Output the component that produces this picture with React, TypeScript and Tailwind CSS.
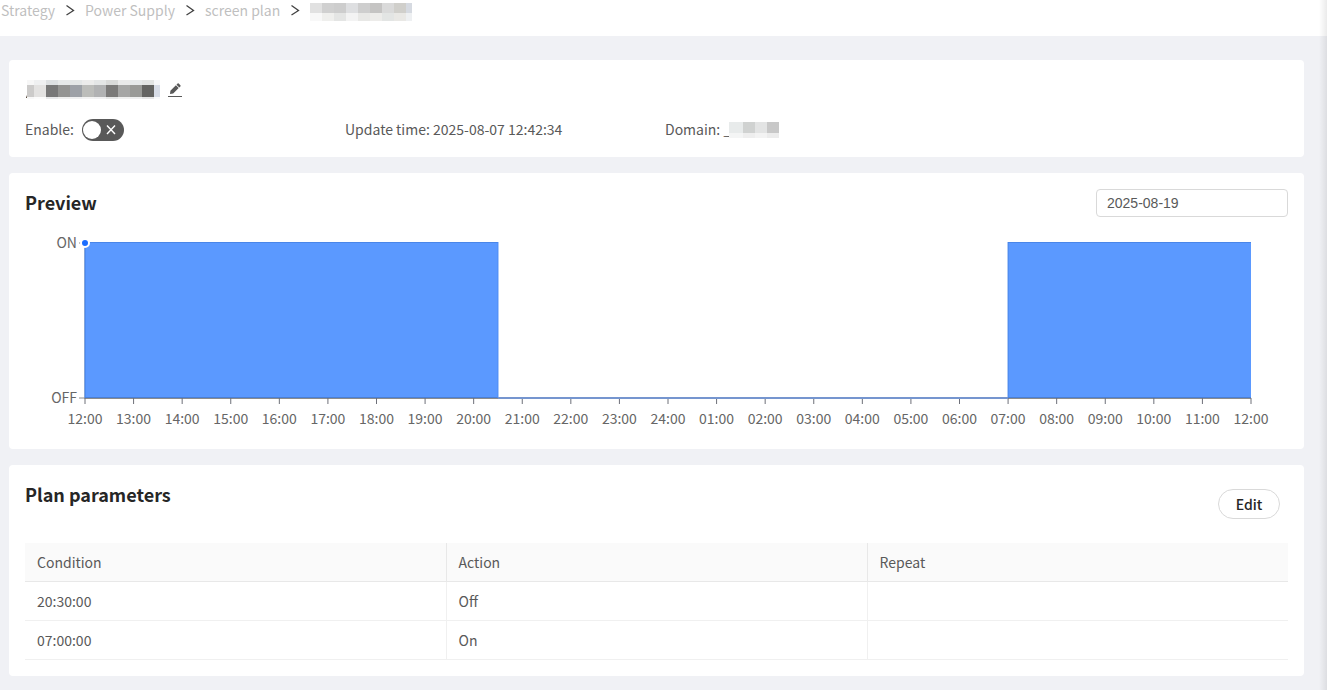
const crumbs = ["Strategy", "Power Supply", "screen plan"];

const hours = [
  "12:00", "13:00", "14:00", "15:00", "16:00", "17:00", "18:00", "19:00", "20:00",
  "21:00", "22:00", "23:00", "24:00", "01:00", "02:00", "03:00", "04:00", "05:00",
  "06:00", "07:00", "08:00", "09:00", "10:00", "11:00", "12:00",
];

// hours counted from 12:00
const onRanges = [
  { start: 0, end: 8.5 },
  { start: 19, end: 24 },
];

const params = [
  { condition: "20:30:00", action: "Off", repeat: "" },
  { condition: "07:00:00", action: "On", repeat: "" },
];

type Cell = [width: number, color: string];

const crumbMask: { h: number; cells: Cell[] }[] = [
  {
    h: 10,
    cells: [
      [12, "#e1e1e1"], [12, "#d0d0d0"], [12, "#cdcdcd"], [12, "#dedfe1"], [12, "#cecece"],
      [12, "#c5c4c3"], [12, "#dadada"], [12, "#d0cfcb"], [6, "#d6dae1"],
    ],
  },
  {
    h: 8,
    cells: [
      [12, "#f8f8f8"], [12, "#efefed"], [12, "#e4e5e4"], [12, "#f3f3f3"], [12, "#e8e8e6"],
      [12, "#edecea"], [12, "#e3e5e4"], [12, "#e9e8e5"], [6, "#eef0f2"],
    ],
  },
];

const titleMask: { h: number; cells: Cell[] }[] = [
  {
    h: 5,
    cells: [
      [7, "#f7f7f7"], [12, "#eff0f1"], [12, "#dde0e2"], [12, "#e7e9e9"], [12, "#e4e7e7"],
      [12, "#ececeb"], [12, "#e4e6e6"], [12, "#d9dad9"], [12, "#eaeaea"], [12, "#e6e9ea"],
      [12, "#e2e4e3"], [6, "#f6f7f9"],
    ],
  },
  {
    h: 12,
    cells: [
      [7, "#cccbca"], [12, "#e3e2e1"], [12, "#787878"], [12, "#949492"], [12, "#9da1a7"],
      [12, "#bcbdba"], [12, "#b1b2b3"], [12, "#7b7a79"], [12, "#a6a6a5"], [12, "#999a97"],
      [12, "#646462"], [6, "#d7dce6"],
    ],
  },
  {
    h: 2,
    cells: [
      [7, "#f8f8f8"], [12, "#fcfcfc"], [12, "#e8e9ea"], [12, "#efefee"], [12, "#eff0f1"],
      [12, "#f3f3f3"], [12, "#f1f1f2"], [12, "#e7e8e8"], [12, "#f0f0f0"], [12, "#eeefef"],
      [12, "#e6e6e6"], [6, "#f9fafb"],
    ],
  },
];

const domainMask: { h: number; cells: Cell[] }[] = [
  { h: 11, cells: [[14, "#e8ebeb"], [12, "#d0d2d1"], [12, "#e3e4e4"], [12, "#c8c8c8"]] },
  { h: 5, cells: [[14, "#f4f5f5"], [12, "#eeeeee"], [12, "#f3f3f3"], [12, "#ececec"]] },
];

function Mask({ rows }: { rows: { h: number; cells: Cell[] }[] }) {
  return (
    <span className="flex flex-col" aria-hidden="true">
      {rows.map((row, i) => (
        <span key={i} className="flex" style={{ height: row.h }}>
          {row.cells.map(([width, color], j) => (
            <span key={j} style={{ width, backgroundColor: color }} />
          ))}
        </span>
      ))}
    </span>
  );
}

function Chart() {
  const pct = (h: number) => `${(h / 24) * 100}%`;
  return (
    <div className="mt-6 pr-[37px] pl-[60px]">
      <svg className="block h-[192px] w-full overflow-visible text-sm" fill="#666666">
        <text x="-8" y="7" textAnchor="end">ON</text>
        <text x="-8" y="162" textAnchor="end">OFF</text>
        <path d="M-6 2h6M-6 157h6M0 2v156" stroke="#8c8c8c" />
        <line x1="0" x2="100%" y1="157.5" y2="157.5" stroke="#8c8c8c" />
        {hours.map((label, i) => (
          <g key={i}>
            <line x1={pct(i)} x2={pct(i)} y1="157" y2="163" stroke="#6e7079" />
            <text x={pct(i)} y="183" textAnchor="middle">{label}</text>
          </g>
        ))}
        {onRanges.map((r) => (
          <g key={r.start}>
            <rect x={pct(r.start)} y="1" width={pct(r.end - r.start)} height="156" fill="#5b99ff" />
            <line x1={pct(r.start)} x2={pct(r.end)} y1="1.5" y2="1.5" stroke="#4a86e8" />
            <line x1={pct(r.start)} x2={pct(r.end)} y1="156.5" y2="156.5" stroke="#4a7fd6" />
            <line x1={pct(r.start)} x2={pct(r.start)} y1="1" y2="157" stroke="#4080e8" />
          </g>
        ))}
        <line x1={pct(8.5)} x2={pct(8.5)} y1="1" y2="157" stroke="#4a8af5" />
        <line x1={pct(8.5)} x2={pct(19)} y1="157" y2="157" stroke="#7595cf" strokeWidth="2" />
        <circle cx="0" cy="2" r="4" fill="#1a6dff" stroke="#fff" strokeWidth="2" />
      </svg>
    </div>
  );
}

export default function App() {
  return (
    <div className="relative min-h-screen bg-[#f0f1f5] font-['Noto_Sans_CJK_SC','Noto_Sans',sans-serif] text-sm text-[#595959]">
      <nav className="flex h-9 items-start bg-white pl-px text-[#bfbfbf]" aria-label="Breadcrumb">
        {crumbs.map((c) => (
          <span key={c} className="flex items-center">
            <a href="#" className="leading-5">{c}</a>
            <svg viewBox="0 0 14 14" className="mx-2 size-3.5" fill="none" stroke="#434343" strokeWidth="1.3">
              <path d="M3.500 2.500L10.500 7.500L3.500 12" />
            </svg>
          </span>
        ))}
        <span className="pt-[3px]">
          <Mask rows={crumbMask} />
        </span>
      </nav>

      <main className="flex flex-col gap-4 pt-6 pr-[23px] pb-3 pl-[9px]">
        <section className="rounded bg-white px-4 pt-5 pb-4">
          <div className="flex items-center gap-2">
            <div className="flex items-end">
              <svg viewBox="0 0 2 4" className="h-1 w-0.5" fill="#3a2a1a">
                <path d="M1 3L2 0v3z" />
              </svg>
              <Mask rows={titleMask} />
            </div>
            <button type="button" aria-label="Rename" className="text-[#595959]">
              <svg viewBox="0 0 14 14" className="size-3.5" fill="currentColor">
                <path d="M2 11L2.400 7.800L7.900 2.300L10.700 5.100L5.200 10.600zM8.500 1.700L9.600.6a.8.8 0 0 1 1.100 0L12.400 2.300a.8.8 0 0 1 0 1.100L11.300 4.500zM0 13h14v1H0z" />
              </svg>
            </button>
          </div>
          <div className="mt-5 flex items-start leading-5">
            <div className="flex w-80 items-start gap-2">
              <label htmlFor="enable">Enable:</label>
              <span className="relative flex h-[22px] w-[42px]">
                <input
                  id="enable"
                  type="checkbox"
                  role="switch"
                  className="size-full appearance-none rounded-full bg-[#595959]"
                />
                <span className="pointer-events-none absolute top-0.5 left-px size-[18px] rounded-full bg-white" />
                <svg viewBox="0 0 10 10" className="pointer-events-none absolute top-1.5 right-2 size-2.5" stroke="#fff" strokeWidth="1.4">
                  <path d="M1 .5l8 8.500M9 .5l-8 8.500" />
                </svg>
              </span>
            </div>
            <div className="w-80">Update time: 2025-08-07 12:42:34</div>
            <div className="flex items-start">
              Domain:&nbsp;_
              <span className="-ml-0.5 pt-[3px]">
                <Mask rows={domainMask} />
              </span>
            </div>
          </div>
        </section>

        <section className="rounded bg-white p-4">
          <div className="flex items-start justify-between">
            <h2 className="text-lg leading-[26px] font-bold text-[#262626]">Preview</h2>
            <input
              type="text"
              aria-label="Preview date"
              defaultValue="2025-08-19"
              className="h-7 w-48 rounded border border-[#d9d9d9] px-2.5 font-['Liberation_Sans',sans-serif] text-sm"
            />
          </div>
          <Chart />
        </section>

        <section className="rounded bg-white p-4">
          <div className="flex items-start justify-between">
            <h2 className="text-lg leading-[26px] font-bold text-[#262626]">Plan parameters</h2>
            <button
              type="button"
              className="mt-2 mr-2 h-[30px] w-[62px] rounded-full border border-[#d9d9d9] font-medium text-[#262626]"
            >
              Edit
            </button>
          </div>
          <table className="mt-6 w-full table-fixed text-left leading-[22px]">
            <thead className="bg-[#fafafa]">
              <tr className="border-b border-[#e8e8e8]">
                <th className="border-r border-[#e8e8e8] px-3 py-2 font-normal">Condition</th>
                <th className="border-r border-[#e8e8e8] px-3 py-2 font-normal">Action</th>
                <th className="px-3 py-2 font-normal">Repeat</th>
              </tr>
            </thead>
            <tbody>
              {params.map((p) => (
                <tr key={p.condition} className="border-b border-[#f0f0f0]">
                  <td className="border-r border-[#f0f0f0] px-3 py-2">{p.condition}</td>
                  <td className="border-r border-[#f0f0f0] px-3 py-2">{p.action}</td>
                  <td className="px-3 py-2">{p.repeat}</td>
                </tr>
              ))}
            </tbody>
          </table>
        </section>
      </main>
      <div className="pointer-events-none absolute inset-y-0 right-0 w-2 bg-linear-to-r from-transparent to-black/8" />
    </div>
  );
}
